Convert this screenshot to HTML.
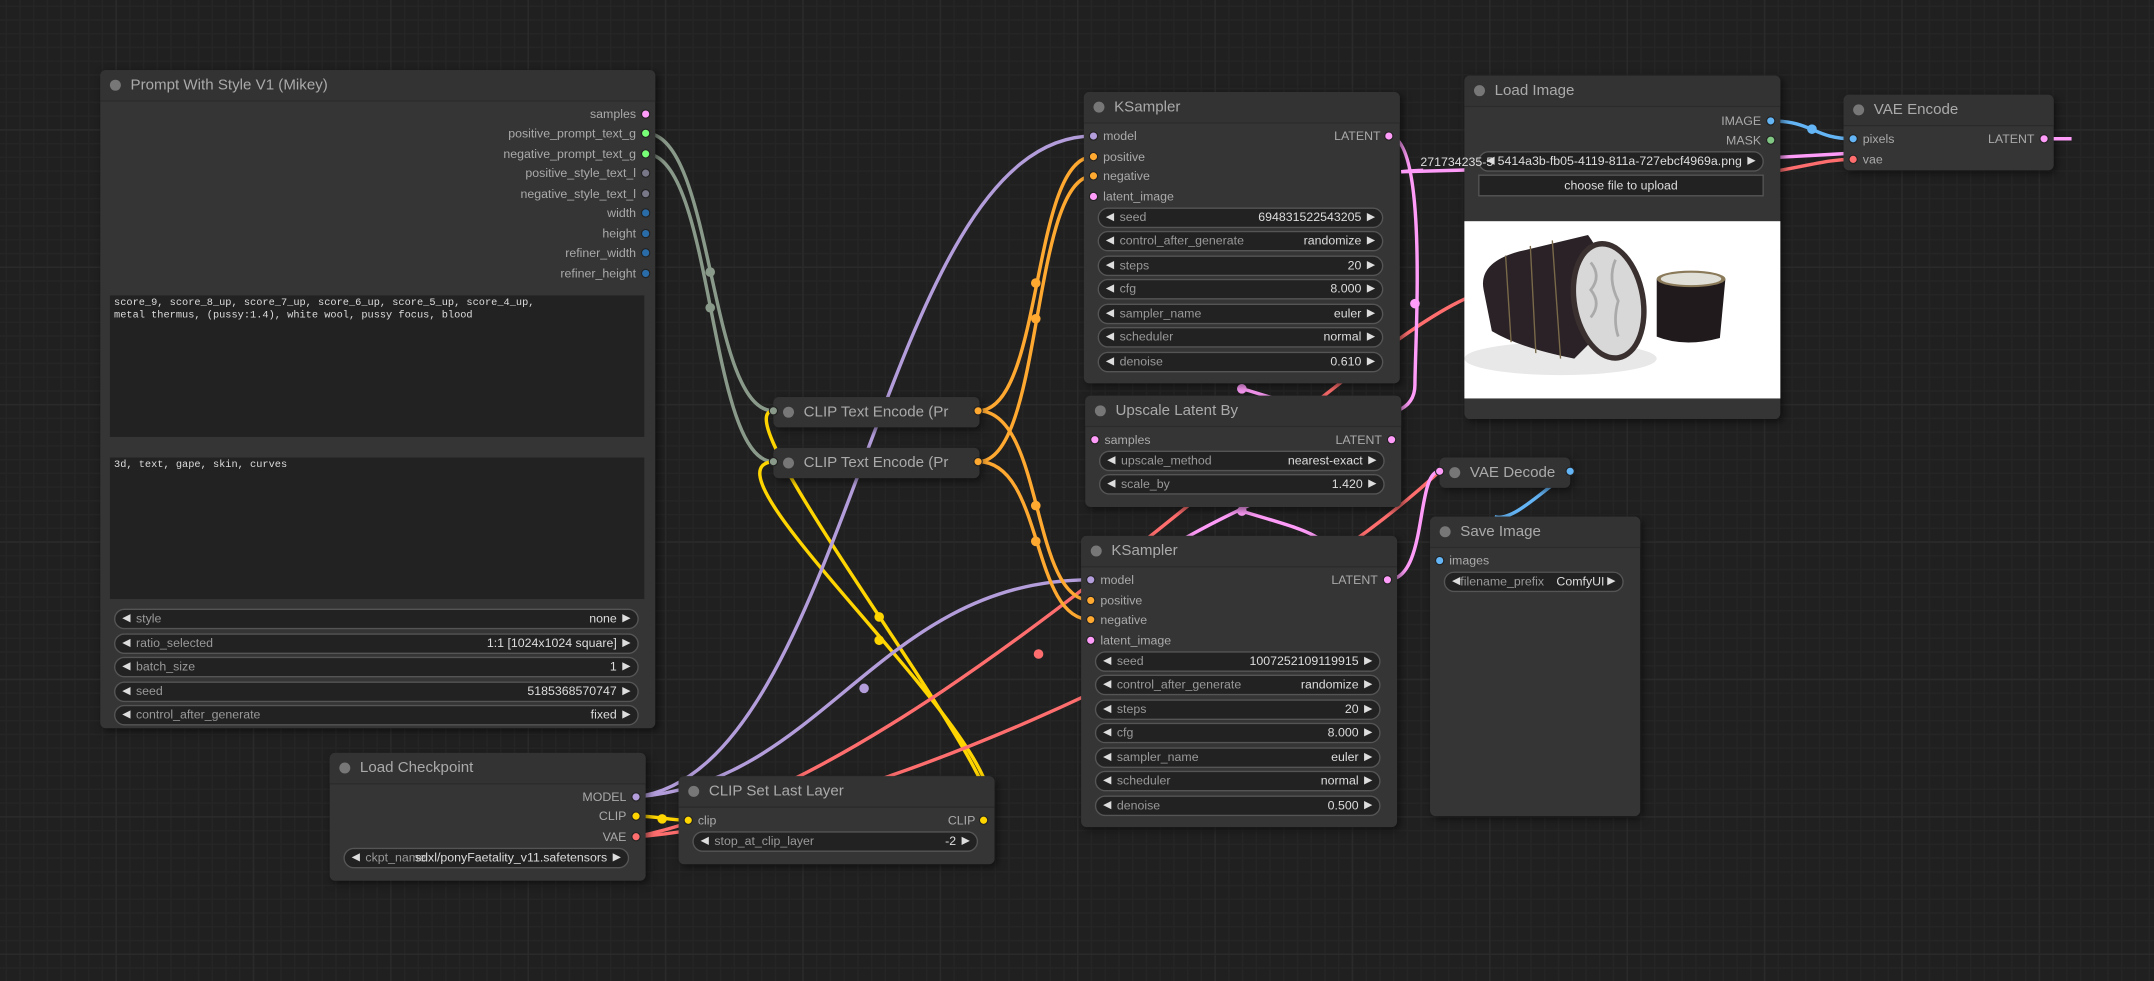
<!DOCTYPE html>
<html><head><meta charset="utf-8">
<style>
html,body{margin:0;padding:0;background:#202020;overflow:hidden;}
body{width:2154px;height:981px;}
#w{position:absolute;left:0;top:0;width:1568px;height:714px;transform:scale(1.37372,1.37395);transform-origin:0 0;
background-color:#202020;
background-image:linear-gradient(#2a2a2a 1px,transparent 1px),linear-gradient(90deg,#2a2a2a 1px,transparent 1px),linear-gradient(#252525 1px,transparent 1px),linear-gradient(90deg,#252525 1px,transparent 1px);
background-size:100px 100px,100px 100px,10px 10px,10px 10px;background-position:-16px -6px;
font-family:"Liberation Sans",sans-serif;color:#aaa;}
.n{position:absolute;background:#353535;border-radius:4px;box-shadow:2px 2px 6px rgba(0,0,0,.5);}
.t{height:22px;line-height:22px;font-size:11px;color:#aaa;padding-left:22px;position:relative;border-bottom:1px solid #2b2b2b;background:#333;border-radius:4px 4px 0 0}
.t:before{content:"";position:absolute;left:7px;top:7px;width:8px;height:8px;border-radius:50%;background:#777;}
.c .t{border-bottom:none;border-radius:4px}
.s{position:absolute;font-size:9px;color:#aaa;line-height:12px;white-space:nowrap}
.r{text-align:right}
.w{position:absolute;height:13px;border:1px solid #555;background:#222;border-radius:8px;font-size:9px;line-height:13px;color:#999;white-space:nowrap;box-sizing:content-box}
.w .l{position:absolute;left:15px}
.w .v{position:absolute;right:15px;color:#ddd}
.w:before{content:"";position:absolute;left:5px;top:3px;border-right:6px solid #ddd;border-top:3.5px solid transparent;border-bottom:3.5px solid transparent}
.w:after{content:"";position:absolute;right:5px;top:3px;border-left:6px solid #ddd;border-top:3.5px solid transparent;border-bottom:3.5px solid transparent}
.ta{position:absolute;background:#222;font-family:"Liberation Mono",monospace;font-size:7.5px;color:#ddd;padding:2px 3px;line-height:9px;box-sizing:border-box}
svg.abs{position:absolute;left:0;top:0}
</style></head><body><div id="w">

<!-- wires (below nodes) -->
<svg class="abs" width="1568" height="714" viewBox="0 0 1568 714" fill="none" stroke-width="2.5">
<g stroke="#8a9a8a">
<path d="M470 97 C520 97 515 299 563 299"/>
<path d="M470 112 C520 112 515 336 563 336"/>
</g>
<g stroke="#ffd500">
<path d="M716 597 C760 597 520 300 563 299"/>
<path d="M716 597 C760 560 500 340 563 336"/>
<path d="M463 594 C480 594 485 597 501 597"/>
</g>
<g stroke="#b39ddb">
<path d="M463 580 C620 560 640 99 796 99"/>
<path d="M463 580 C600 570 640 422 794 422"/>
</g>
<g stroke="#ff6e6e">
<path d="M463 609 C600 600 900 480 1048 343"/>
<path d="M463 609 C700 560 1000 220 1090 210"/>
<path d="M1290 125 C1320 120 1330 116 1349 116"/>
</g>
<g stroke="#ffa931">
<path d="M712 299 C760 299 750 114 796 114"/>
<path d="M712 336 C760 336 750 128 796 128"/>
<path d="M712 299 C760 299 750 437 794 437"/>
<path d="M712 336 C760 336 750 451 794 451"/>
</g>
<g stroke="#ff9cf9">
<path d="M1011 99 C1040 99 1030 250 1030 280 C1030 330 900 280 904 283"/>
<path d="M1013 320 C1040 320 780 400 794 466"/>
<path d="M1488 101 C1510 101 1300 118 1020 125"/>
<path d="M1010 422 C1040 422 1030 343 1048 343"/>
<path d="M904 372 C930 380 950 385 960 392"/>
</g>
<g stroke="#64b5f6">
<path d="M1289 88 C1320 88 1320 101 1349 101"/>
<path d="M1143 343 C1120 360 1100 380 1088 376"/>
</g>
<g stroke="none">
<circle cx="517" cy="198" r="3.5" fill="#8a9a8a"/><circle cx="517" cy="224" r="3.5" fill="#8a9a8a"/>
<circle cx="640" cy="449" r="3.5" fill="#ffd500"/><circle cx="640" cy="466" r="3.5" fill="#ffd500"/>
<circle cx="482" cy="596" r="3.5" fill="#ffd500"/>
<circle cx="629" cy="501" r="3.5" fill="#b39ddb"/>
<circle cx="754" cy="206" r="3.5" fill="#ffa931"/><circle cx="754" cy="232" r="3.5" fill="#ffa931"/>
<circle cx="754" cy="368" r="3.5" fill="#ffa931"/><circle cx="754" cy="394" r="3.5" fill="#ffa931"/>
<circle cx="1030" cy="221" r="3.5" fill="#ff9cf9"/><circle cx="904" cy="283" r="3.5" fill="#ff9cf9"/><circle cx="904" cy="372" r="3.5" fill="#ff9cf9"/>
<circle cx="756" cy="476" r="3.5" fill="#ff6e6e"/>
<circle cx="1319" cy="94" r="3.5" fill="#64b5f6"/>
</g>
</svg>

<!-- Prompt With Style -->
<div class="n" style="left:73px;top:51px;width:404px;height:479px">
<div class="t">Prompt With Style V1 (Mikey)</div>
<div class="s r" style="right:14px;top:26px">samples</div>
<div class="s r" style="right:14px;top:40px">positive_prompt_text_g</div>
<div class="s r" style="right:14px;top:55px">negative_prompt_text_g</div>
<div class="s r" style="right:14px;top:69px">positive_style_text_l</div>
<div class="s r" style="right:14px;top:84px">negative_style_text_l</div>
<div class="s r" style="right:14px;top:98px">width</div>
<div class="s r" style="right:14px;top:113px">height</div>
<div class="s r" style="right:14px;top:127px">refiner_width</div>
<div class="s r" style="right:14px;top:142px">refiner_height</div>
<div class="ta" style="left:7px;top:164px;width:389px;height:103px">score_9, score_8_up, score_7_up, score_6_up, score_5_up, score_4_up,<br>metal thermus, (pussy:1.4), white wool, pussy focus, blood</div>
<div class="ta" style="left:7px;top:282px;width:389px;height:103px">3d, text, gape, skin, curves</div>
<div class="w" style="left:10px;top:392px;width:380px"><span class="l">style</span><span class="v">none</span></div>
<div class="w" style="left:10px;top:410px;width:380px"><span class="l">ratio_selected</span><span class="v">1:1 [1024x1024 square]</span></div>
<div class="w" style="left:10px;top:427px;width:380px"><span class="l">batch_size</span><span class="v">1</span></div>
<div class="w" style="left:10px;top:445px;width:380px"><span class="l">seed</span><span class="v">5185368570747</span></div>
<div class="w" style="left:10px;top:462px;width:380px"><span class="l">control_after_generate</span><span class="v">fixed</span></div>
</div>

<!-- Load Checkpoint -->
<div class="n" style="left:240px;top:548px;width:230px;height:93px">
<div class="t">Load Checkpoint</div>
<div class="s r" style="right:14px;top:26px">MODEL</div>
<div class="s r" style="right:14px;top:40px">CLIP</div>
<div class="s r" style="right:14px;top:55px">VAE</div>
<div class="w" style="left:10px;top:69px;width:206px"><span class="l">ckpt_name</span><span class="v">sdxl/ponyFaetality_v11.safetensors</span></div>
</div>

<!-- CLIP Set Last Layer -->
<div class="n" style="left:494px;top:565px;width:230px;height:64px">
<div class="t">CLIP Set Last Layer</div>
<div class="s" style="left:14px;top:26px">clip</div>
<div class="s r" style="right:14px;top:26px">CLIP</div>
<div class="w" style="left:10px;top:40px;width:206px"><span class="l">stop_at_clip_layer</span><span class="v">-2</span></div>
</div>

<!-- CLIP Text Encode -->
<div class="n c" style="left:563px;top:289px;width:150px;height:22px"><div class="t">CLIP Text Encode (Pr</div></div>
<div class="n c" style="left:563px;top:326px;width:150px;height:22px"><div class="t">CLIP Text Encode (Pr</div></div>

<!-- KSampler 1 -->
<div class="n" style="left:789px;top:67px;width:230px;height:212px">
<div class="t">KSampler</div>
<div class="s" style="left:14px;top:26px">model</div>
<div class="s r" style="right:14px;top:26px">LATENT</div>
<div class="s" style="left:14px;top:41px">positive</div>
<div class="s" style="left:14px;top:55px">negative</div>
<div class="s" style="left:14px;top:70px">latent_image</div>
<div class="w" style="left:10px;top:84px;width:206px"><span class="l">seed</span><span class="v">694831522543205</span></div>
<div class="w" style="left:10px;top:101px;width:206px"><span class="l">control_after_generate</span><span class="v">randomize</span></div>
<div class="w" style="left:10px;top:119px;width:206px"><span class="l">steps</span><span class="v">20</span></div>
<div class="w" style="left:10px;top:136px;width:206px"><span class="l">cfg</span><span class="v">8.000</span></div>
<div class="w" style="left:10px;top:154px;width:206px"><span class="l">sampler_name</span><span class="v">euler</span></div>
<div class="w" style="left:10px;top:171px;width:206px"><span class="l">scheduler</span><span class="v">normal</span></div>
<div class="w" style="left:10px;top:189px;width:206px"><span class="l">denoise</span><span class="v">0.610</span></div>
</div>

<!-- Upscale Latent By -->
<div class="n" style="left:790px;top:288px;width:230px;height:81px">
<div class="t">Upscale Latent By</div>
<div class="s" style="left:14px;top:26px">samples</div>
<div class="s r" style="right:14px;top:26px">LATENT</div>
<div class="w" style="left:10px;top:40px;width:206px"><span class="l">upscale_method</span><span class="v">nearest-exact</span></div>
<div class="w" style="left:10px;top:57px;width:206px"><span class="l">scale_by</span><span class="v">1.420</span></div>
</div>

<!-- KSampler 2 -->
<div class="n" style="left:787px;top:390px;width:230px;height:212px">
<div class="t">KSampler</div>
<div class="s" style="left:14px;top:26px">model</div>
<div class="s r" style="right:14px;top:26px">LATENT</div>
<div class="s" style="left:14px;top:41px">positive</div>
<div class="s" style="left:14px;top:55px">negative</div>
<div class="s" style="left:14px;top:70px">latent_image</div>
<div class="w" style="left:10px;top:84px;width:206px"><span class="l">seed</span><span class="v">1007252109119915</span></div>
<div class="w" style="left:10px;top:101px;width:206px"><span class="l">control_after_generate</span><span class="v">randomize</span></div>
<div class="w" style="left:10px;top:119px;width:206px"><span class="l">steps</span><span class="v">20</span></div>
<div class="w" style="left:10px;top:136px;width:206px"><span class="l">cfg</span><span class="v">8.000</span></div>
<div class="w" style="left:10px;top:154px;width:206px"><span class="l">sampler_name</span><span class="v">euler</span></div>
<div class="w" style="left:10px;top:171px;width:206px"><span class="l">scheduler</span><span class="v">normal</span></div>
<div class="w" style="left:10px;top:189px;width:206px"><span class="l">denoise</span><span class="v">0.500</span></div>
</div>

<!-- Load Image -->
<div class="n" style="left:1066px;top:55px;width:230px;height:250px">
<div class="t">Load Image</div>
<div class="s r" style="right:14px;top:27px">IMAGE</div>
<div class="s r" style="right:14px;top:41px">MASK</div>
<div class="w" style="left:10px;top:55px;width:206px"><span class="v">5414a3b-fb05-4119-811a-727ebcf4969a.png</span></div>
<div style="position:absolute;left:10px;top:72px;width:206px;height:14px;border:1px solid #555;background:#222;color:#ddd;font-size:9px;line-height:14px;text-align:center">choose file to upload</div>
<div style="position:absolute;left:0;top:106px;width:230px;height:129px;background:#fff;overflow:hidden">
<svg width="230" height="129" viewBox="0 0 230 129">
<ellipse cx="70" cy="100" rx="70" ry="12" fill="#e8e8e8"/>
<path d="M14 50 Q10 30 40 22 L90 10 Q105 30 110 70 L80 100 Q40 92 20 80 Z" fill="#2a2226"/>
<path d="M30 25 L34 88 M48 18 L52 96 M64 14 L70 100" stroke="#7a6a4a" stroke-width="1" fill="none"/>
<ellipse cx="105" cy="58" rx="27" ry="44" fill="#3a3030" transform="rotate(-10 105 58)"/>
<ellipse cx="105" cy="58" rx="23" ry="40" fill="#d8d8d8" transform="rotate(-10 105 58)"/>
<path d="M92 30 q8 10 0 20 q8 10 0 20 M110 28 q-6 14 2 30 q-4 14 0 26" stroke="#aaa" stroke-width="2" fill="none"/>
<path d="M140 42 L180 38 L190 42 L186 85 Q160 92 140 84 Z" fill="#201a1c"/>
<ellipse cx="165" cy="42" rx="25" ry="6" fill="#8a7a5a"/>
<ellipse cx="165" cy="42" rx="22" ry="4.5" fill="#e0e0d8"/>
</svg></div>
</div>

<!-- VAE Decode -->
<div class="n c" style="left:1048px;top:333px;width:95px;height:22px"><div class="t">VAE Decode</div></div>

<!-- Save Image -->
<div class="n" style="left:1041px;top:376px;width:153px;height:218px">
<div class="t">Save Image</div>
<div class="s" style="left:14px;top:26px">images</div>
<div class="w" style="left:10px;top:40px;width:129px"><span class="l" style="left:11px">filename_prefix</span><span class="v" style="right:13px">ComfyUI</span></div>
</div>

<!-- VAE Encode -->
<div class="n" style="left:1342px;top:69px;width:153px;height:55px">
<div class="t">VAE Encode</div>
<div class="s" style="left:14px;top:26px">pixels</div>
<div class="s r" style="right:14px;top:26px">LATENT</div>
<div class="s" style="left:14px;top:41px">vae</div>
</div>

<!-- slot dots (above nodes) -->
<svg class="abs" width="1568" height="714" viewBox="0 0 1568 714" fill="none" stroke-width="2.5">
<path d="M1020 125 C1030 124 1034 124 1036 124" stroke="#ff9cf9"/>
<path d="M1495 101 C1500 101 1505 101 1508 101" stroke="#ff9cf9"/>
<g stroke="#222" stroke-width="0.8">
<circle cx="470" cy="83" r="3" fill="#ff9cf9"/>
<circle cx="470" cy="97" r="3" fill="#7f7"/><circle cx="470" cy="112" r="3" fill="#7f7"/>
<circle cx="470" cy="126" r="3" fill="#778"/><circle cx="470" cy="141" r="3" fill="#778"/>
<circle cx="470" cy="155" r="3" fill="#2a6ca8"/><circle cx="470" cy="170" r="3" fill="#2a6ca8"/>
<circle cx="470" cy="184" r="3" fill="#2a6ca8"/><circle cx="470" cy="199" r="3" fill="#2a6ca8"/>
<circle cx="463" cy="580" r="3" fill="#b39ddb"/><circle cx="463" cy="594" r="3" fill="#ffd500"/><circle cx="463" cy="609" r="3" fill="#ff6e6e"/>
<circle cx="501" cy="597" r="3" fill="#ffd500"/><circle cx="716" cy="597" r="3" fill="#ffd500"/>
<circle cx="563" cy="299" r="3" fill="#8a9a8a"/><circle cx="712" cy="299" r="3" fill="#ffa931"/>
<circle cx="563" cy="336" r="3" fill="#8a9a8a"/><circle cx="712" cy="336" r="3" fill="#ffa931"/>
<circle cx="796" cy="99" r="3" fill="#b39ddb"/><circle cx="796" cy="114" r="3" fill="#ffa931"/><circle cx="796" cy="128" r="3" fill="#ffa931"/><circle cx="796" cy="143" r="3" fill="#ff9cf9"/><circle cx="1011" cy="99" r="3" fill="#ff9cf9"/>
<circle cx="797" cy="320" r="3" fill="#ff9cf9"/><circle cx="1013" cy="320" r="3" fill="#ff9cf9"/>
<circle cx="794" cy="422" r="3" fill="#b39ddb"/><circle cx="794" cy="437" r="3" fill="#ffa931"/><circle cx="794" cy="451" r="3" fill="#ffa931"/><circle cx="794" cy="466" r="3" fill="#ff9cf9"/><circle cx="1010" cy="422" r="3" fill="#ff9cf9"/>
<circle cx="1289" cy="88" r="3" fill="#64b5f6"/><circle cx="1289" cy="102" r="3" fill="#81c784"/>
<circle cx="1048" cy="343" r="3" fill="#ff9cf9"/><circle cx="1143" cy="343" r="3" fill="#64b5f6"/>
<circle cx="1048" cy="408" r="3" fill="#64b5f6"/>
<circle cx="1349" cy="101" r="3" fill="#64b5f6"/><circle cx="1349" cy="116" r="3" fill="#ff6e6e"/><circle cx="1488" cy="101" r="3" fill="#ff9cf9"/>
</g>
</svg>
<div class="s" style="left:1034px;top:112px;color:#ddd">271734235-5</div>
</div></body></html>
